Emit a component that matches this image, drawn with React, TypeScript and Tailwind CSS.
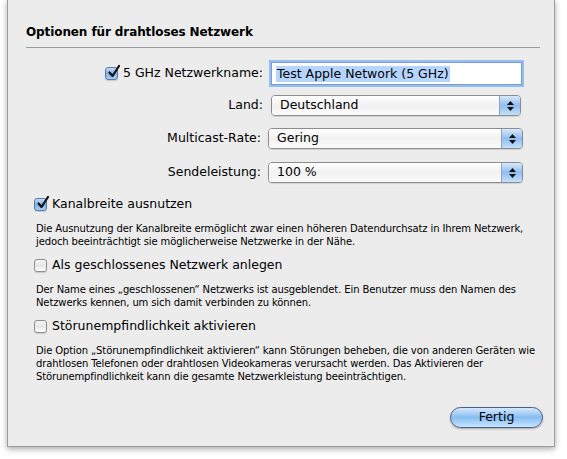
import React from 'react'

function Checkbox({ checked }: { checked: boolean }) {
  return (
    <span
      className={
        'relative inline-block w-[13px] h-[13px] shrink-0 rounded-[3px] border shadow-[0_1px_1px_rgba(0,0,0,0.15)] ' +
        (checked
          ? 'border-[#5a7aa6] bg-gradient-to-b from-[#c6dcf5] via-[#7fb0e8] to-[#a9d0f7]'
          : 'border-[#8e8e8e] bg-gradient-to-b from-[#f4f4f4] via-[#e6e6e6] to-[#ffffff]')
      }
    >
      {checked && (
        <svg viewBox="0 0 14 14" className="absolute left-[1px] top-[-3px] w-[14px] h-[14px] overflow-visible">
          <path d="M2.5 7.5 L5.5 11 L12 1" fill="none" stroke="#111" strokeWidth="2.2" strokeLinecap="round" strokeLinejoin="round" />
        </svg>
      )}
    </span>
  )
}

function Popup({ value, className }: { value: string; className: string }) {
  return (
    <div
      className={
        'flex h-[21px] rounded-[4px] border border-[#8c8c8c] overflow-hidden shadow-[0_1px_1px_rgba(0,0,0,0.12)] ' +
        className
      }
    >
      <div className="flex-1 flex items-center pl-[8px] bg-gradient-to-b from-[#ffffff] via-[#f1f1f1] to-[#fbfbfb] text-[12.5px] text-black">
        {value}
      </div>
      <div className="w-[21px] flex flex-col items-center justify-center gap-[2px] border-l border-[#8ca3c4] bg-gradient-to-b from-[#d9e9fb] via-[#8fbdf0] to-[#c5e1fb]">
        <svg viewBox="0 0 7 4" className="w-[7px] h-[4px]">
          <path d="M3.5 0 L7 4 L0 4 Z" fill="#111" />
        </svg>
        <svg viewBox="0 0 7 4" className="w-[7px] h-[4px]">
          <path d="M0 0 L7 0 L3.5 4 Z" fill="#111" />
        </svg>
      </div>
    </div>
  )
}

export default function App() {
  return (
    <div className="w-[567px] h-[459px] bg-white font-['DejaVu_Sans',sans-serif] text-black">
      <div className="ml-[7px] w-[548px] h-[447px] bg-[#ececec] border-x border-b border-[#9c9c9c] shadow-[0_2px_6px_rgba(0,0,0,0.35)] flex flex-col pl-[18px] pr-[14px]">
        <h1 className="mt-[24px] h-[16px] flex items-center text-[12px] font-bold tracking-[-0.1px]">
          Optionen für drahtloses Netzwerk
        </h1>
        <div className="mt-[7px] h-px bg-[#9a9a9a] w-[514px]" />

        <div className="mt-[14px] flex flex-col">
          <div className="flex items-center h-[23px]">
            <div className="w-[237px] flex justify-end items-center gap-[5px] text-[12.5px]">
              <Checkbox checked />
              <span>5 GHz Netzwerkname:</span>
            </div>
            <div className="ml-[8px] w-[251px] h-[23px] border border-[#7a9ad0] shadow-[0_0_0_2px_#94bdf0] bg-white flex items-center pl-[4px]">
              <span className="bg-[#b5d5ff] text-[12.5px] leading-[16px] px-[1px]">Test Apple Network (5 GHz)</span>
            </div>
          </div>

          <div className="mt-[10px] flex items-center">
            <div className="w-[237px] text-right text-[12.5px]">Land:</div>
            <Popup value="Deutschland" className="ml-[8px] w-[250px]" />
          </div>

          <div className="mt-[12px] flex items-center">
            <div className="w-[235px] text-right text-[12.5px]">Multicast-Rate:</div>
            <Popup value="Gering" className="ml-[7px] w-[255px]" />
          </div>

          <div className="mt-[13px] flex items-center">
            <div className="w-[235px] text-right text-[12.5px]">Sendeleistung:</div>
            <Popup value="100 %" className="ml-[7px] w-[255px]" />
          </div>
        </div>

        <div className="mt-[13px] ml-[8px] flex flex-col">
          <label className="flex items-center gap-[5px] h-[16px] text-[12.5px]">
            <Checkbox checked />
            <span>Kanalbreite ausnutzen</span>
          </label>
          <p className="mt-[10px] ml-[2px] text-[10px] leading-[13px] tracking-[-0.12px] whitespace-nowrap">
            Die Ausnutzung der Kanalbreite ermöglicht zwar einen höheren Datendurchsatz in Ihrem Netzwerk,
            <br />
            jedoch beeinträchtigt sie möglicherweise Netzwerke in der Nähe.
          </p>

          <label className="mt-[9px] flex items-center gap-[5px] h-[16px] text-[12.5px]">
            <Checkbox checked={false} />
            <span>Als geschlossenes Netzwerk anlegen</span>
          </label>
          <p className="mt-[10px] ml-[2px] text-[10px] leading-[13px] tracking-[-0.12px] whitespace-nowrap">
            Der Name eines „geschlossenen“ Netzwerks ist ausgeblendet. Ein Benutzer muss den Namen des
            <br />
            Netzwerks kennen, um sich damit verbinden zu können.
          </p>

          <label className="mt-[9px] flex items-center gap-[5px] h-[16px] text-[12.5px]">
            <Checkbox checked={false} />
            <span>Störunempfindlichkeit aktivieren</span>
          </label>
          <p className="mt-[10px] ml-[2px] text-[10px] leading-[13px] tracking-[-0.12px] whitespace-nowrap">
            Die Option „Störunempfindlichkeit aktivieren“ kann Störungen beheben, die von anderen Geräten wie
            <br />
            drahtlosen Telefonen oder drahtlosen Videokameras verursacht werden. Das Aktivieren der
            <br />
            Störunempfindlichkeit kann die gesamte Netzwerkleistung beeinträchtigen.
          </p>
        </div>

        <div className="mt-auto mb-[18px] flex justify-end">
          <button className="mr-[-3px] w-[93px] h-[21px] rounded-full border border-[#4d5f86] bg-gradient-to-b from-[#d6e8fb] via-[#86bdf3] to-[#c8e6fd] shadow-[0_1px_2px_rgba(0,0,0,0.3)] text-[12.5px] text-black flex items-center justify-center">
            Fertig
          </button>
        </div>
      </div>
    </div>
  )
}
